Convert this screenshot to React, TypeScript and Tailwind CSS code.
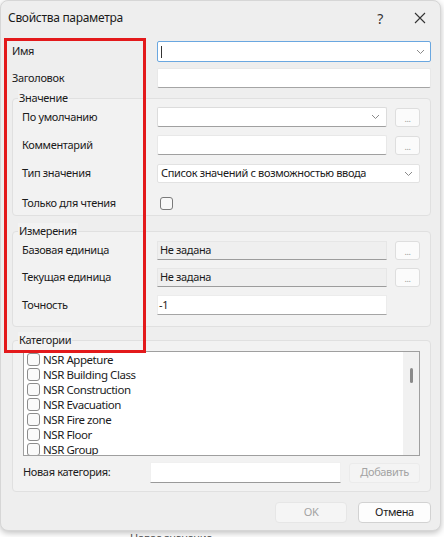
import React from "react";

const font = { fontFamily: '"Noto Sans", "Liberation Sans", sans-serif' };

function Chevron() {
  return (
    <svg width="9" height="6" viewBox="0 0 9 6" className="shrink-0">
      <path d="M1 1l3.5 3.5L8 1" fill="none" stroke="#8a8a8a" strokeWidth="1" />
    </svg>
  );
}

function DotsButton() {
  return (
    <div className="w-[25px] h-[19px] ml-[8px] shrink-0 rounded-[3px] border border-[#dedede] bg-[#fbfbfb] flex items-end justify-center pb-[3px] text-[9px] leading-none text-[#9a9a9a]">
      ...
    </div>
  );
}

function Row({ label, children, h }: { label: string; children: React.ReactNode; h: string }) {
  return (
    <div className={`flex items-center ${h}`}>
      <div className="w-[144px] pl-[9px] shrink-0 text-[11px] text-[#1b1b1b]">{label}</div>
      {children}
    </div>
  );
}

function Group({ title, children, cls }: { title: string; children: React.ReactNode; cls: string }) {
  return (
    <div className={`relative border border-[#e0e0e0] rounded-[4px] bg-[#f2f2f2] ${cls}`}>
      <div className="absolute left-[5px] -top-[9px] px-[1px] text-[11px] leading-[16px] text-[#1b1b1b] bg-[#f2f2f2]">
        {title}
      </div>
      {children}
    </div>
  );
}

const categories = [
  "NSR Appeture",
  "NSR Building Class",
  "NSR Construction",
  "NSR Evacuation",
  "NSR Fire zone",
  "NSR Floor",
  "NSR Group",
];

export default function App() {
  return (
    <div className="w-[444px] h-[537px] bg-white relative overflow-hidden tracking-[-0.35px]" style={font}>
      {/* underlying window text */}
      <div className="absolute left-[130px] top-[531px] text-[11px] leading-[14px] text-[#555]">Новое значение</div>
      <div className="absolute left-[128px] top-0 w-px h-[6px] bg-[#999]" />

      <div className="relative w-[441px] h-[531px] bg-[#eeeeee] rounded-[8px] border border-[#d6d6d6] shadow-[0_2px_6px_rgba(0,0,0,0.25)] flex flex-col">
        {/* title bar */}
        <div className="h-[34px] flex items-center pl-[7px] pr-[14px] shrink-0">
          <div className="text-[12px] tracking-[-0.3px] text-[#1b1b1b] flex-1">Свойства параметра</div>
          <div className="text-[14px] text-[#333] w-[20px] text-center mr-[24px]">?</div>
          <svg width="12" height="12" viewBox="0 0 12 12">
            <path d="M1 1l10 10M11 1L1 11" stroke="#333" strokeWidth="1.1" />
          </svg>
        </div>

        <div className="flex flex-col pl-[11px] pr-[9px]">
          {/* Имя */}
          <div className="flex items-center h-[21px] mt-[6px]">
            <div className="w-[145px] shrink-0 text-[11px] text-[#1b1b1b]">Имя</div>
            <div className="flex-1 h-[21px] bg-white border border-[#6aa7e0] rounded-[2px] flex items-center pl-[3px] pr-[5px]">
              <div className="w-px h-[12px] bg-[#333]" />
              <div className="flex-1" />
              <Chevron />
            </div>
          </div>
          {/* Заголовок */}
          <div className="flex items-center h-[20px] mt-[6px]">
            <div className="w-[145px] shrink-0 text-[11px] text-[#1b1b1b]">Заголовок</div>
            <div className="flex-1 h-[20px] bg-white border border-[#e8e8e8] border-b-[#a5a5a5] rounded-[2px]" />
          </div>

          {/* Значение */}
          <Group title="Значение" cls="mt-[10px] h-[118px] pt-[8px]">
            <Row label="По умолчанию" h="h-[20px]">
              <div className="w-[230px] h-[20px] bg-white border border-[#dcdcdc] border-b-[#a0a0a0] rounded-[2px] flex items-center justify-end pr-[6px]">
                <Chevron />
              </div>
              <DotsButton />
            </Row>
            <Row label="Комментарий" h="h-[20px] mt-[8px]">
              <div className="w-[230px] h-[20px] bg-white border border-[#e8e8e8] border-b-[#a0a0a0] rounded-[2px]" />
              <DotsButton />
            </Row>
            <Row label="Тип значения" h="h-[19px] mt-[9px]">
              <div className="w-[263px] h-[19px] bg-white border border-[#e2e2e2] rounded-[2px] flex items-center pl-[3px] pr-[6px]">
                <div className="flex-1 text-[11px] text-[#1b1b1b]">Список значений с возможностью ввода</div>
                <Chevron />
              </div>
            </Row>
            <Row label="Только для чтения" h="h-[14px] mt-[13px]">
              <div className="ml-[3px] w-[13px] h-[13px] rounded-[3px] border border-[#7a7a7a] bg-[#f8f8f8]" />
            </Row>
          </Group>

          {/* Измерения */}
          <Group title="Измерения" cls="mt-[15px] h-[96px] pt-[9px]">
            <Row label="Базовая единица" h="h-[19px]">
              <div className="w-[230px] h-[19px] bg-[#efefef] border border-[#e6e6e6] border-b-[#9c9c9c] flex items-center pl-[2px] text-[11px] text-[#1b1b1b]">
                Не задана
              </div>
              <DotsButton />
            </Row>
            <Row label="Текущая единица" h="h-[19px] mt-[8px]">
              <div className="w-[230px] h-[19px] bg-[#efefef] border border-[#e6e6e6] border-b-[#9c9c9c] flex items-center pl-[2px] text-[11px] text-[#1b1b1b]">
                Не задана
              </div>
              <DotsButton />
            </Row>
            <Row label="Точность" h="h-[20px] mt-[8px]">
              <div className="w-[230px] h-[20px] bg-white border border-[#ececec] border-b-[#a5a5a5] flex items-center pl-[1px] text-[11px] text-[#1b1b1b]">
                -1
              </div>
            </Row>
          </Group>

          {/* Категории */}
          <Group title="Категории" cls="mt-[13px] h-[152px] pt-[10px] px-[10px]">
            <div className="h-[105px] bg-white border border-[#9f9f9f] overflow-hidden flex">
              <div className="flex-1 flex flex-col pl-[3px]">
                {categories.map((c) => (
                  <div key={c} className="flex items-center h-[15px] shrink-0">
                    <div className="w-[13px] h-[13px] rounded-[3px] border border-[#8c8c8c] bg-[#fafafa] shrink-0" />
                    <div className="ml-[3px] text-[11.5px] leading-[15px] tracking-[-0.45px] text-[#1b1b1b]">{c}</div>
                  </div>
                ))}
              </div>
              <div className="w-[16px] bg-[#f1f1f1] flex justify-center pt-[16px]">
                <div className="w-[3px] h-[15px] rounded-full bg-[#8a8a8a]" />
              </div>
            </div>
            <div className="flex items-center mt-[6px] h-[21px]">
              <div className="w-[127px] text-[11px] text-[#1b1b1b]">Новая категория:</div>
              <div className="w-[192px] h-[21px] bg-white border border-[#f0f0f0] border-b-[#9a9a9a]" />
              <div className="ml-[8px] w-[71px] h-[20px] bg-[#f4f4f4] border border-[#ebebeb] rounded-[3px] flex items-center justify-center text-[11px] text-[#a3a3a3]">
                Добавить
              </div>
            </div>
          </Group>

          {/* buttons */}
          <div className="flex justify-end mt-[10px]">
            <div className="w-[72px] h-[21px] bg-[#f5f5f5] border border-[#e6e6e6] rounded-[4px] flex items-center justify-center text-[11px] text-[#a3a3a3]">
              OK
            </div>
            <div className="ml-[11px] w-[73px] h-[21px] bg-[#fdfdfd] border border-[#d2d2d2] rounded-[4px] flex items-center justify-center text-[11px] text-[#1b1b1b]">
              Отмена
            </div>
          </div>
        </div>
      </div>

      {/* red highlight */}
      <div className="absolute left-[4px] top-[38px] w-[142px] h-[315px] border-[3px] border-[#e3191b]" />
    </div>
  );
}
